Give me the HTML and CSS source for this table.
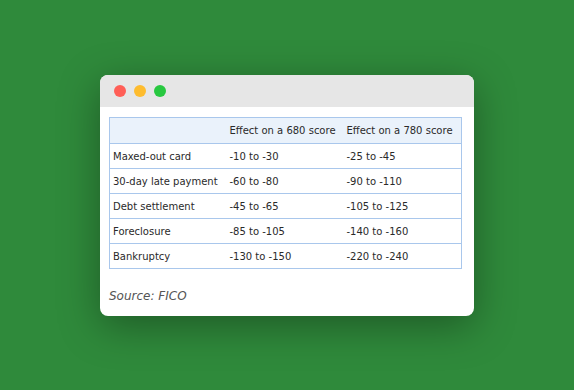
FILE: index.html
```html
<!DOCTYPE html>
<html>
<head>
<meta charset="utf-8">
<link rel="stylesheet" href="styles.css">
</head>
<body>
<div class="stage">
  <div class="window">
    <div class="titlebar">
      <span class="dot red"></span>
      <span class="dot yellow"></span>
      <span class="dot green"></span>
    </div>
    <div class="content">
      <table class="grid">
        <colgroup><col class="c1"><col class="c2"><col class="c3"></colgroup>
        <thead>
          <tr><th></th><th>Effect on a 680 score</th><th>Effect on a 780 score</th></tr>
        </thead>
        <tbody>
          <tr><td>Maxed-out card</td><td>-10 to -30</td><td>-25 to -45</td></tr>
          <tr><td>30-day late payment</td><td>-60 to -80</td><td>-90 to -110</td></tr>
          <tr><td>Debt settlement</td><td>-45 to -65</td><td>-105 to -125</td></tr>
          <tr><td>Foreclosure</td><td>-85 to -105</td><td>-140 to -160</td></tr>
          <tr><td>Bankruptcy</td><td>-130 to -150</td><td>-220 to -240</td></tr>
        </tbody>
      </table>
      <p class="source">Source: FICO</p>
    </div>
  </div>
</div>
</body>
</html>
```
FILE: styles.css
```css
html, body {
  margin: 0;
  padding: 0;
}
body {
  width: 574px;
  height: 390px;
  background: #2f8a3b;
  font-family: "DejaVu Sans", Verdana, sans-serif;
}
.stage {
  height: 390px;
  display: flex;
  align-items: flex-start;
  justify-content: center;
  padding-top: 75px;
  box-sizing: border-box;
}
.window {
  width: 374px;
  background: #fff;
  border-radius: 8px;
  overflow: hidden;
  box-shadow: 0 10px 40px rgba(0, 0, 0, 0.35);
}
.titlebar {
  height: 32px;
  background: #e6e6e6;
  display: flex;
  align-items: center;
  gap: 8px;
  padding-left: 14px;
}
.dot {
  width: 12px;
  height: 12px;
  border-radius: 50%;
  display: block;
}
.red { background: #ff5f57; }
.yellow { background: #febc2e; }
.green { background: #28c840; }
.content {
  padding: 10px 12px 13px 9px;
}
.grid {
  width: 352px;
  table-layout: fixed;
  border-collapse: collapse;
  border: 1px solid #a9c7ec;
  font-size: 10px;
  color: #2a2a2a;
}
.c1 { width: 116px; }
.c2 { width: 117px; }
.c3 { width: 119px; }
.grid th {
  background: #eaf2fb;
  font-weight: normal;
  text-align: left;
  height: 25px;
  padding: 0 3px 0 4px;
  border-bottom: 1px solid #a9c7ec;
  white-space: nowrap;
}
.grid td {
  height: 24px;
  padding: 0 3px 0 4px;
  border-bottom: 1px solid #a9c7ec;
  white-space: nowrap;
}
.grid td:first-child { padding-left: 3px; }
.source {
  margin: 20px 0 0 0;
  font-style: italic;
  font-size: 12px;
  color: #555;
}
```
